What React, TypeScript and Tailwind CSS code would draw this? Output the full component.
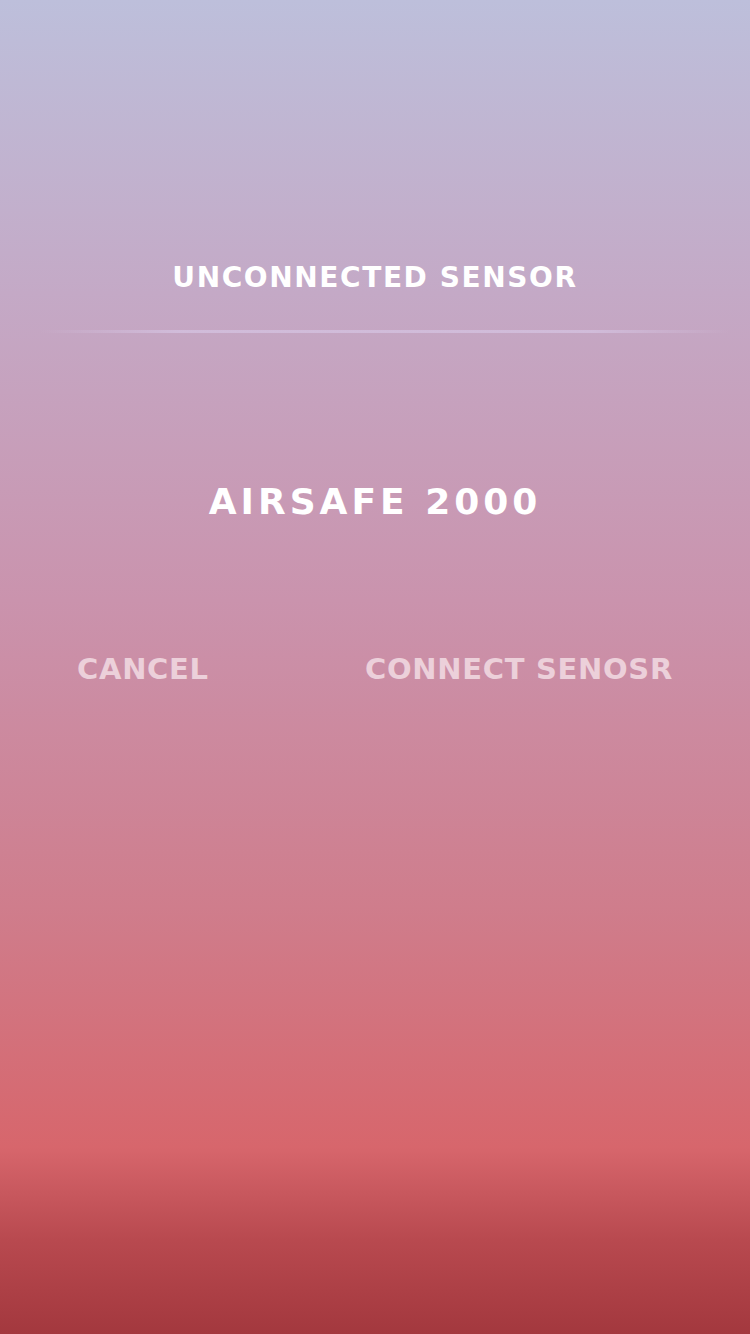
export default function App() {
  return (
    <div
      className="w-[750px] h-[1334px] flex flex-col items-center bg-[linear-gradient(180deg,#bdbfdb_0%,#c4a9c6_22%,#ca93ad_45%,#cf7d8c_68%,#d7666c_86%,#b8494f_93%,#a3383e_100%)]"
      style={{ fontFamily: '"DejaVu Sans", "Open Sans", sans-serif' }}
    >
      <div className="h-[258px]" />
      <h1 className="text-white font-bold text-[28px] leading-[40px] tracking-[1.6px]">UNCONNECTED SENSOR</h1>
      <div className="mt-[32px] w-[690px] ml-[20px] h-[3px] bg-[linear-gradient(90deg,rgba(210,190,220,0)_0%,rgba(210,190,220,0.9)_20%,rgba(210,190,220,0.9)_80%,rgba(210,190,220,0)_100%)]" />
      <div className="h-[144px]" />
      <h2 className="text-white font-bold text-[36px] leading-[50px] tracking-[4px]">AIRSAFE 2000</h2>
      <div className="h-[120px]" />
      <div className="w-full flex justify-between pl-[77px] pr-[77px] text-[#ecd0da] font-bold text-[29px] leading-[44px] tracking-[0.7px]">
        <button>CANCEL</button>
        <button>CONNECT SENOSR</button>
      </div>
    </div>
  );
}
